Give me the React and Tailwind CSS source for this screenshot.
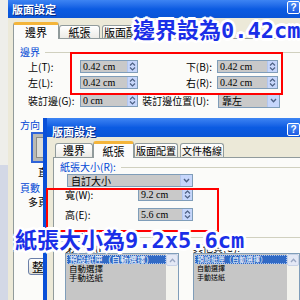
import React from "react";

const CJK = "font-['Noto_Sans_CJK_TC',sans-serif]";

function Help({ cls = "" }) {
  return (
    <div
      className={`w-[13px] h-[13px] rounded-[2px] border border-white bg-gradient-to-b from-[#4a8cf7] to-[#1d5ce3] flex items-center justify-center text-white text-[10px] font-bold leading-none font-['Liberation_Sans',sans-serif] ${cls}`}
    >
      ?
    </div>
  );
}

function Spin() {
  return (
    <div className="w-[10px] h-full shrink-0 bg-[#c6d6fb] border-l border-[#b3c6ee] flex items-center justify-center">
      <svg width="7" height="9" viewBox="0 0 7 9">
        <path d="M1 3.5 L3.5 1 L6 3.5 M1 5.5 L3.5 8 L6 5.5" stroke="#4d6185" strokeWidth="1.2" fill="none" />
      </svg>
    </div>
  );
}

function Drop() {
  return (
    <div className="w-[12px] h-full shrink-0 bg-[#c6d6fb] border-l border-[#b3c6ee] flex items-center justify-center">
      <svg width="7" height="5" viewBox="0 0 7 5">
        <path d="M1 1 L3.5 3.7 L6 1" stroke="#4d6185" strokeWidth="1.4" fill="none" />
      </svg>
    </div>
  );
}

function Spinbox({ w, text }) {
  return (
    <div className={`${w} h-full flex border border-[#7f9db9] bg-[#c9c9c9]`}>
      <div className="flex-1 flex items-center pl-[2px] text-[10px] leading-none text-black font-['Liberation_Serif',serif] whitespace-nowrap overflow-hidden">
        {text}
      </div>
      <Spin />
    </div>
  );
}

function Tab({ w, label, sel, h = "h-[14px]", fs = "text-[11px]" }) {
  if (sel)
    return (
      <div
        className={`${w} h-[17px] -mb-px relative z-10 bg-[#fcfcfb] border-x border-[#919b9c] border-t-[3px] border-t-[#f4b53a] rounded-t-[3px] flex items-center justify-center ${fs} leading-none text-black ${CJK}`}
      >
        {label}
      </div>
    );
  return (
    <div
      className={`${w} ${h} bg-gradient-to-b from-white to-[#ecebe6] border-x border-t border-[#919b9c] rounded-t-[3px] flex items-center justify-center ${fs} leading-none text-black ${CJK} whitespace-nowrap overflow-hidden`}
    >
      {label}
    </div>
  );
}

function GroupTitle({ text, cls = "" }) {
  return (
    <div className={`flex items-center h-[10px] ${cls}`}>
      <span className={`text-[10px] leading-none text-[#0046d5] whitespace-nowrap ${CJK}`}>{text}</span>
      <div className="flex-1 ml-[5px] border-t border-[#d0d0bf]" />
    </div>
  );
}

function Label({ w, text, cls = "" }) {
  return (
    <div className={`${w} shrink-0 text-[10px] leading-none text-black whitespace-nowrap ${CJK} ${cls}`}>{text}</div>
  );
}

const outline =
  "[text-shadow:2px_0_#fff,-2px_0_#fff,0_2px_#fff,0_-2px_#fff,2px_2px_#fff,-2px_-2px_#fff,2px_-2px_#fff,-2px_2px_#fff,3px_0_#fff,-3px_0_#fff,0_3px_#fff,0_-3px_#fff]";

function ListBox({ w, items, size }) {
  return (
    <div className={`${w} h-[60px] flex border border-[#7f9db9] bg-[#c6c6c6]`}>
      <div className="flex-1 min-w-0 pt-px pl-px flex flex-col">
        {items.map((t, i) => (
          <div
            key={i}
            className={`h-[9px] flex items-center pl-[2px] ${size} leading-none whitespace-nowrap ${CJK} ${
              i === 0 ? "bg-[#316ac5] text-white outline-1 outline-dotted outline-[#aac4ee] -outline-offset-1" : "text-black"
            }`}
          >
            {t}
          </div>
        ))}
      </div>
      <div className="w-[12px] shrink-0 bg-[#f3f3ee] flex flex-col">
        <div className="h-[12px] bg-[#e3e8f5] border border-[#c8d2e6] rounded-[2px] flex items-center justify-center">
          <svg width="7" height="5" viewBox="0 0 7 5">
            <path d="M1 4 L3.5 1.3 L6 4" stroke="#9aa7c2" strokeWidth="1.3" fill="none" />
          </svg>
        </div>
      </div>
    </div>
  );
}

export default function App() {
  return (
    <div className="relative w-[300px] h-[300px] overflow-hidden bg-[#ecebe6]">
      {/* left strip behind */}
      <div className="absolute left-0 top-0 w-[8px] h-[300px] flex flex-col">
        <div className="h-[165px] bg-[#eeeeea]" />
        <div className="flex-1 bg-[#d3d8e6]" />
      </div>

      {/* Dialog 1 */}
      <div className="absolute left-[8px] top-0 w-[292px] h-[300px] bg-[#ece9d8] flex flex-col">
        <div className="h-[18px] flex items-center justify-between bg-gradient-to-b from-[#3d84f3] via-[#0b5be2] to-[#0a54d6] pl-[4px]">
          <span className={`text-white font-bold text-[11px] leading-none ${CJK} [text-shadow:1px_1px_#0a2a80]`}>版面設定</span>
          <Help cls="-mt-[3px]" />
        </div>
        <div className="flex-1 pl-[5px] pt-[4px] flex flex-col">
          <div className="flex items-end h-[16px]">
            <Tab w="w-[46px]" label="邊界" sel />
            <Tab w="w-[41px]" label="紙張" h="h-[13px]" />
            <Tab w="w-[48px] ml-[2px]" label="版面配置" h="h-[13px]" />
          </div>
          <div className="flex-1 bg-[#fbfbf9] border-t border-l border-[#919b9c] flex flex-col pl-[6px]">
            <GroupTitle text="邊界" cls="mt-[8px]" />
            <div className="mt-[3px] h-[13px] flex items-center pl-[8px]">
              <Label w="w-[52px]" text="上(T):" />
              <Spinbox w="w-[58px]" text="0.42 cm" />
              <Label w="w-[79px]" text="下(B):" cls="text-right pr-[5px]" />
              <Spinbox w="w-[61px]" text="0.42 cm" />
            </div>
            <div className="mt-[3px] h-[13px] flex items-center pl-[8px]">
              <Label w="w-[52px]" text="左(L):" />
              <Spinbox w="w-[58px]" text="0.42 cm" />
              <Label w="w-[79px]" text="右(R):" cls="text-right pr-[5px]" />
              <Spinbox w="w-[61px]" text="0.42 cm" />
            </div>
            <div className="mt-[5px] h-[13px] flex items-center pl-[8px]">
              <Label w="w-[52px]" text="裝訂邊(G):" />
              <Spinbox w="w-[58px]" text="0 cm" />
              <Label w="w-[80px]" text="裝訂邊位置(U):" cls="text-right pr-[9px]" />
              <div className="w-[62px] h-[14px] flex border border-[#7f9db9] bg-[#c9c9c9]">
                <div className={`flex-1 flex items-center pl-[3px] text-[10px] leading-none ${CJK}`}>靠左</div>
                <Drop />
              </div>
            </div>
            <div className={`mt-[13px] h-[10px] text-[10px] leading-none text-[#0046d5] ${CJK}`}>方向</div>
            <div className="mt-[2px] ml-[11px] w-[30px] h-[31px] border-2 border-[#2f63d8] bg-[#b9b9b4] p-[3px]">
              <div className="w-[8px] h-full bg-[#dcdcd6] border border-[#8a8a84]" />
            </div>
            <div className={`mt-[4px] pl-[18px] h-[9px] text-[10px] leading-none text-black ${CJK}`}>直向</div>
            <div className={`mt-[7px] h-[10px] text-[10px] leading-none text-[#0046d5] ${CJK}`}>頁數</div>
            <div className={`mt-[4px] pl-[8px] h-[10px] text-[10px] leading-none text-black ${CJK}`}>多頁</div>
            <div className="mt-[51px] ml-[8px] w-[40px] h-[17px] rounded-[3px] border border-[#6b7fa8] bg-gradient-to-b from-white to-[#dcdcd4] flex items-center pl-[3px]">
              <span className={`text-[12px] leading-none text-black ${CJK}`}>整份</span>
            </div>
          </div>
        </div>
      </div>

      {/* Red rect 1 */}
      <div className="absolute left-[70px] top-[52px] w-[213px] h-[43px] border-2 border-[#ff0000]" />

      {/* Annotation 1 */}
      <div
        className={`absolute left-[133px] top-[20px] text-[22px] leading-none font-bold text-[#1a2fe8] whitespace-nowrap font-['DejaVu_Sans_Mono','Noto_Sans_CJK_TC',monospace] ${outline}`}
      >
        邊界設為0.42cm
      </div>

      {/* Dialog 2 */}
      <div className="absolute left-[43px] top-[118px] w-[262px] h-[190px] flex flex-col border-l-[4px] border-[#0a50d8] bg-[#ece9d8]">
        <div className="h-[22px] flex items-center justify-between bg-gradient-to-b from-[#3d84f3] via-[#0b5be2] to-[#0a54d6] pl-[5px] pr-[5px]">
          <span className={`mt-[8px] text-white font-bold text-[11px] leading-none ${CJK} [text-shadow:1px_1px_#0a2a80]`}>版面設定</span>
          <Help cls="mt-[4px]" />
        </div>
        <div className="flex-1 pl-[6px] pt-[4px] flex flex-col">
          <div className="flex items-end h-[16px]">
            <Tab w="w-[38px] ml-[2px]" label="邊界" />
            <Tab w="w-[41px]" label="紙張" sel />
            <Tab w="w-[44px]" label="版面配置" fs="text-[10px]" />
            <Tab w="w-[44px] ml-[2px]" label="文件格線" fs="text-[10px]" />
          </div>
          <div className="flex-1 bg-[#fbfbf9] border-t border-l border-[#919b9c] flex flex-col pl-[6px]">
            <GroupTitle text="紙張大小(R):" cls="mt-[4px]" />
            <div className="mt-[2px] ml-[7px] w-[126px] h-[13px] flex border border-[#7f9db9] bg-[#c9c9c9]">
              <div className={`flex-1 flex items-center pl-[3px] text-[10px] leading-none ${CJK}`}>自訂大小</div>
              <Drop />
            </div>
            <div className="mt-[1px] h-[13px] flex items-center pl-[5px]">
              <Label w="w-[73px]" text="寬(W):" />
              <Spinbox w="w-[55px]" text="9.2 cm" />
            </div>
            <div className="mt-[7px] h-[13px] flex items-center pl-[5px]">
              <Label w="w-[73px]" text="高(E):" />
              <Spinbox w="w-[55px]" text="5.6 cm" />
            </div>
            <GroupTitle text="紙張來源" cls="mt-[11px]" />
            <div className="mt-[1px] h-[9px] flex items-start pl-[5px]">
              <Label w="w-[128px]" text="第一頁(F):" />
              <Label w="w-[60px]" text="其他頁(O):" />
            </div>
            <div className="mt-px flex pl-[5px]">
              <ListBox w="w-[114px]" size="text-[8.5px]" items={["預設紙匣（自動選擇）", "自動選擇", "手動送紙"]} />
              <div className="w-[14px]" />
              <ListBox w="w-[107px]" size="text-[7px]" items={["預設紙匣（自動選擇）", "自動選擇", "手動送紙"]} />
            </div>
          </div>
        </div>
      </div>

      {/* Red rect 2 */}
      <div className="absolute left-[46px] top-[188px] w-[173px] h-[44px] border-2 border-[#ff0000]" />

      {/* Annotation 2 */}
      <div
        className={`absolute left-[15px] top-[230px] text-[22px] leading-none font-bold text-[#1a2fe8] whitespace-nowrap font-['DejaVu_Sans_Mono','Noto_Sans_CJK_TC',monospace] ${outline}`}
      >
        紙張大小為9.2x5.6cm
      </div>
    </div>
  );
}
